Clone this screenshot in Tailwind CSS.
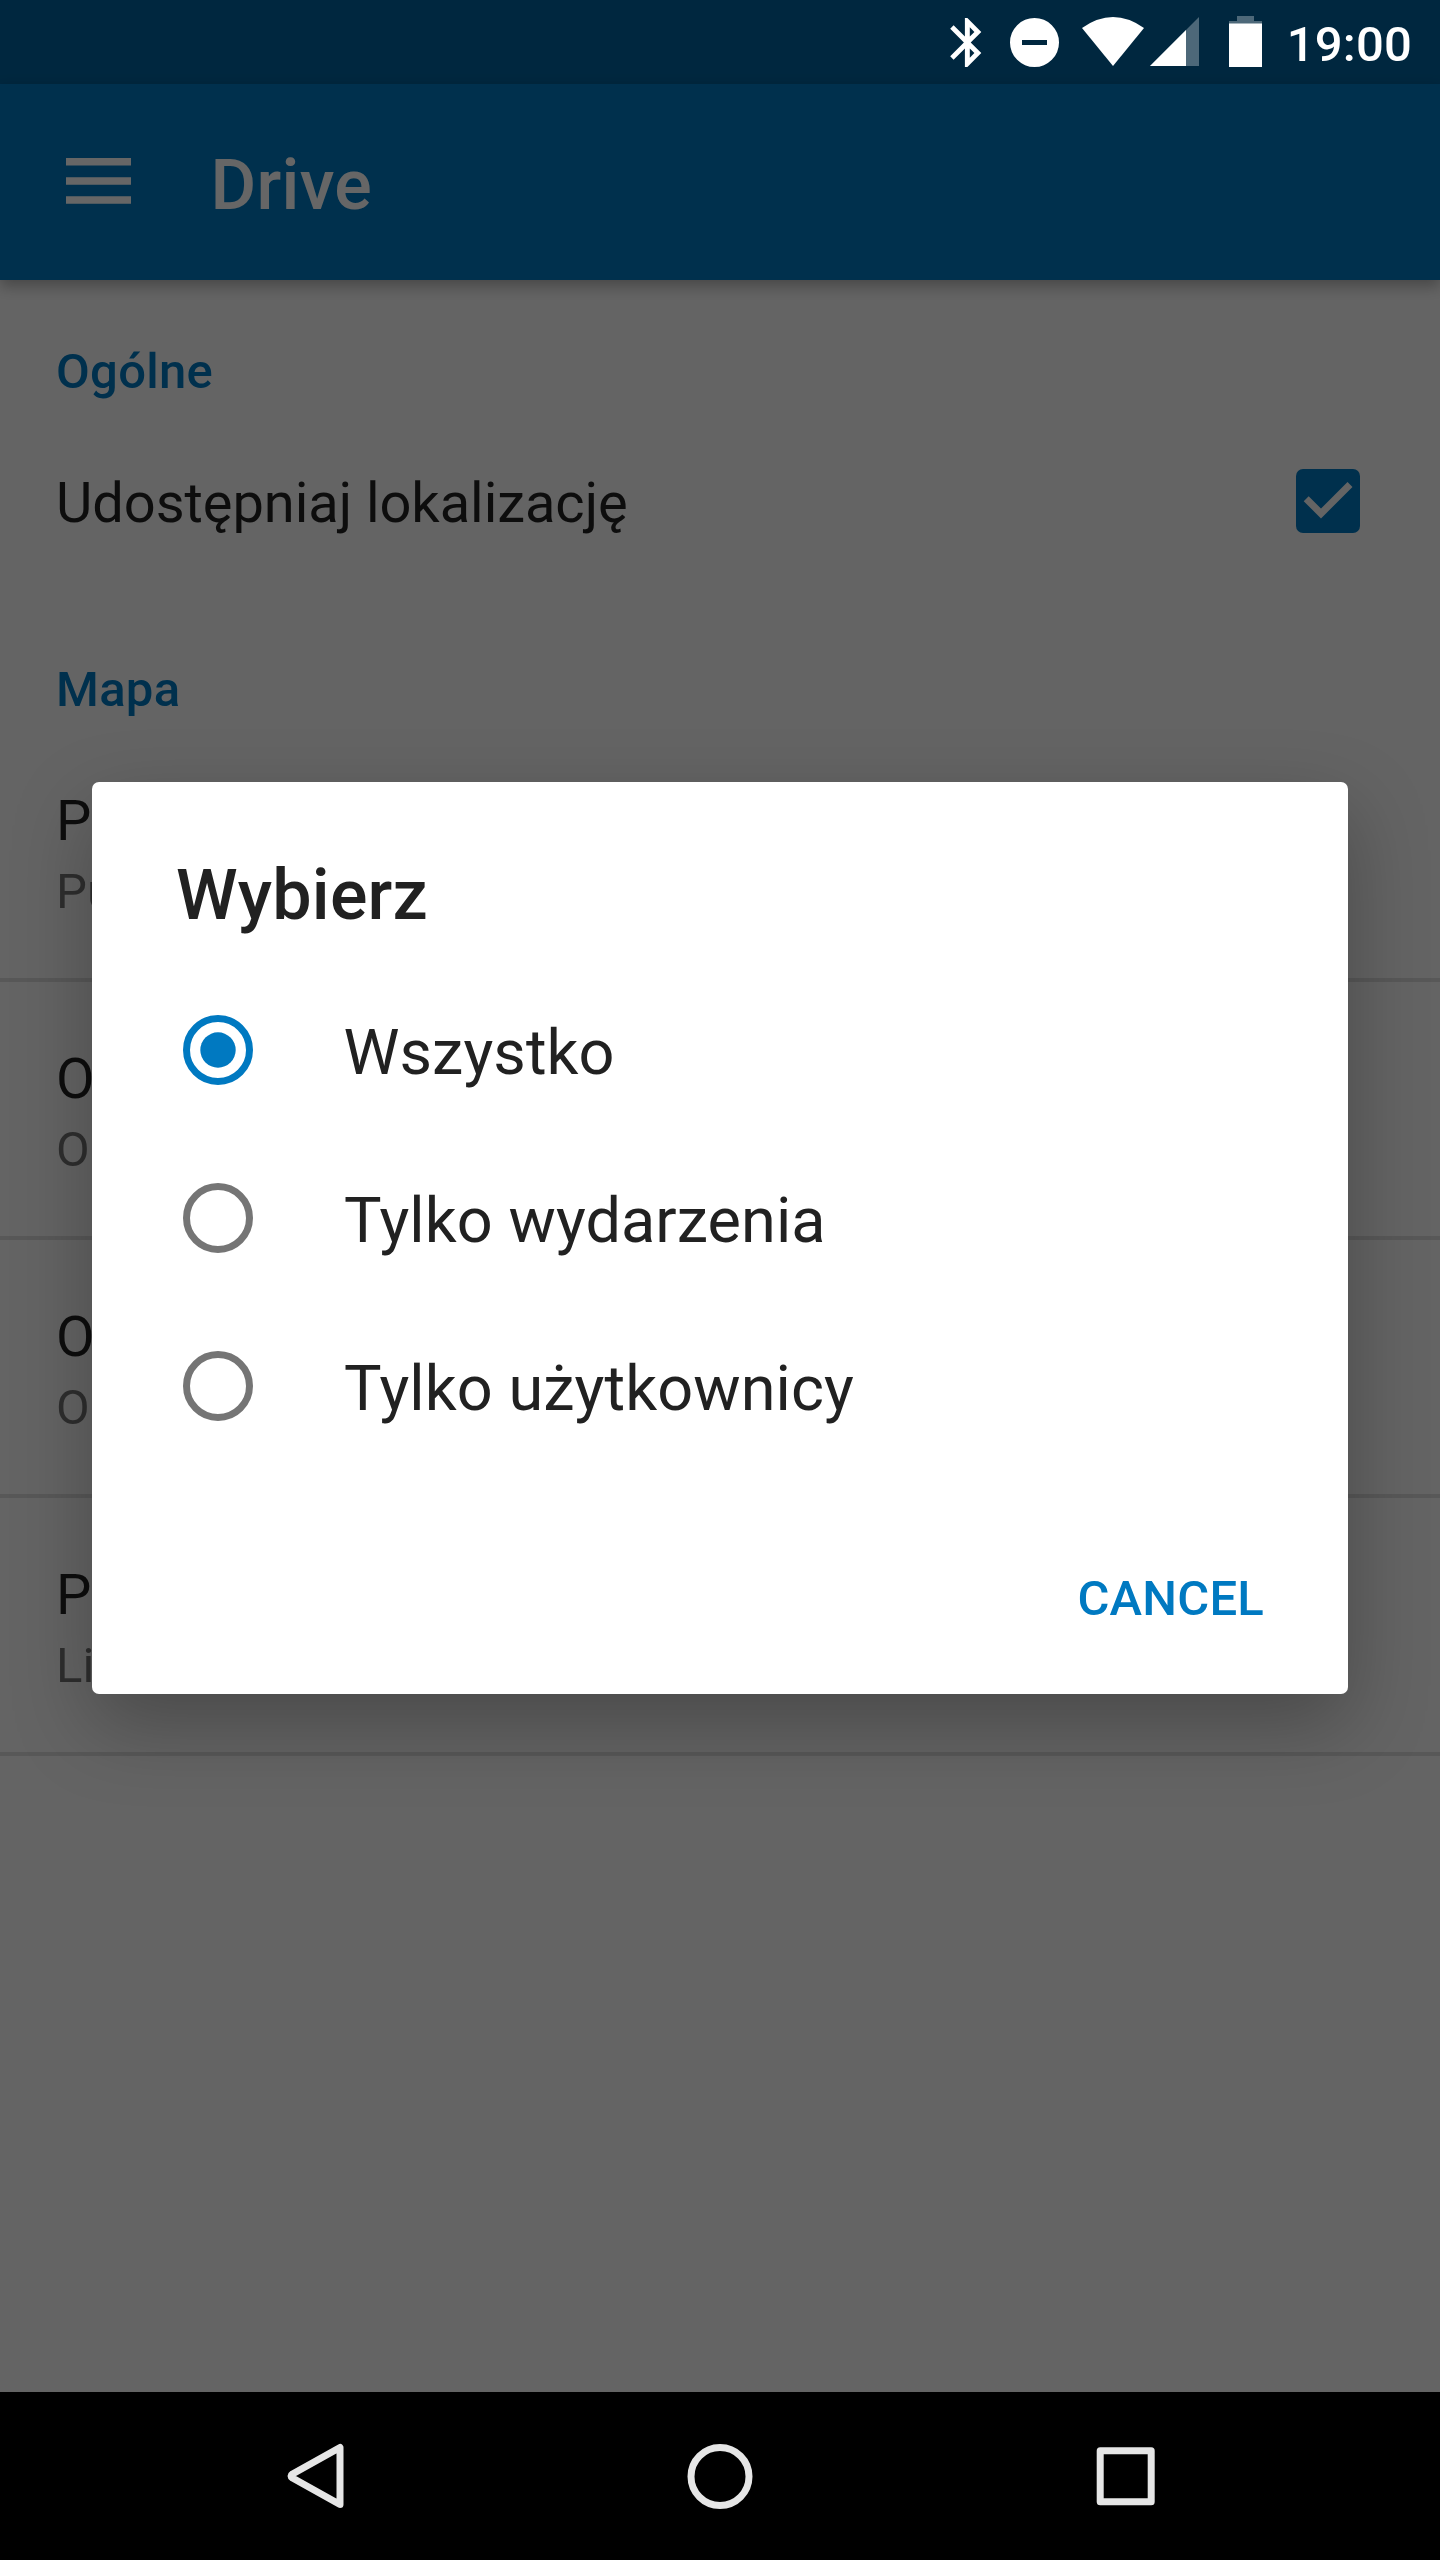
<!DOCTYPE html>
<html lang="pl">
<head>
<meta charset="utf-8">
<title>Drive</title>
<script src="https://cdn.jsdelivr.net/npm/@tailwindcss/browser@4"></script>
</head>
<body class="bg-black">
<div class="relative flex h-[2560px] w-[1440px] flex-col overflow-hidden bg-[#fafafa] font-[Roboto,sans-serif]">
  <div class="h-[84px] shrink-0 bg-[#00629d]"></div>
  <header class="z-0 flex h-[196px] shrink-0 items-center bg-[#0079c1] pl-[65.5px] text-white shadow-[0_6px_14px_rgba(0,0,0,0.3)]">
    <svg class="-mt-[3px] h-[46px] w-[65px]" viewBox="0 0 65 46" fill="currentColor"><path d="M0 0h65v7.5H0zM0 19.2h65v7.5H0zM0 38.2h65v7.5H0z"/></svg>
    <h1 class="mt-[6px] ml-[80px] text-[70px] leading-[82px] font-medium tracking-[0.3px]">Drive</h1>
  </header>
  <main class="flex grow flex-col text-[56px] leading-[70px] text-black/87">
    <h2 class="mt-[57px] pl-[56px] text-[49px] font-medium tracking-[0.3px] text-[#0079c1]">Ogólne</h2>
    <div class="flex h-[192px] items-center justify-between pr-[80px] pl-[56px]">
      <span class="tracking-[-0.05px]">Udostępniaj lokalizację</span>
      <svg class="-mt-[4px] size-[64px]" viewBox="0 0 64 64"><rect width="64" height="64" rx="7" fill="#0079c1"/><path d="M10.2 29.7 25 44.5 54 15.5" fill="none" stroke="#fafafa" stroke-width="7"/></svg>
    </div>
    <h2 class="mt-[56px] pl-[56px] text-[49px] font-medium tracking-[0.3px] text-[#0079c1]">Mapa</h2>
    <ul class="-mt-px">
      <li class="h-[258px] border-b-4 border-black/12 pt-[62px] pl-[56px]"><p>P</p><p class="pt-px text-[49px] text-black/54">Pu</p></li>
      <li class="h-[258px] border-b-4 border-black/12 pt-[62px] pl-[56px]"><p>O</p><p class="pt-px text-[49px] text-black/54">O</p></li>
      <li class="h-[258px] border-b-4 border-black/12 pt-[62px] pl-[56px]"><p>O</p><p class="pt-px text-[49px] text-black/54">O</p></li>
      <li class="h-[258px] border-b-4 border-black/12 pt-[62px] pl-[56px]"><p>P</p><p class="pt-px text-[49px] text-black/54">Li</p></li>
    </ul>
  </main>

  <!-- Scrim with dialog -->
  <div class="absolute inset-0 flex flex-col bg-black/60">
    <div class="flex h-[84px] shrink-0 items-center justify-end pr-[28px] text-white">
      <svg class="h-[84px] w-[340px]" viewBox="945 0 340 84" fill="currentColor">
        <path d="m981.3 31.9-13.9-13.9h-2.5v18.6L953.6 25.3l-3.4 3.4 13.7 13.8-13.7 13.8 3.4 3.4 11.3-11.3V67h2.5l13.9-13.9L970.7 42.500zM969.800 27.300l4.600 4.600-4.600 4.700zM974.400 53.100l-4.600 4.600v-9.300z"/>
        <path fill-rule="evenodd" d="M1034.500 18a24.500 24.500 0 1 0 0 49a24.500 24.500 0 1 0 0-49zM1022 40h25v5h-25z"/>
        <path d="M1082 28Q1113 6 1144 28L1113 66z"/>
        <path opacity=".3" d="M1199 17v49h-49z"/>
        <path d="M1186 30v36h-36z"/>
        <path opacity=".3" d="M1237 16h17v5h8v3h-33v-3h8z"/>
        <path d="M1229 23.500h33V67h-33z"/>
      </svg>
      <span class="mt-[5px] w-[127px] text-right text-[49px] leading-[60px] font-medium tracking-[0.2px]">19:00</span>
    </div>
    <section class="mt-[698px] ml-[92px] flex h-[912px] w-[1256px] flex-col rounded-[7px] bg-white px-[84px] text-[#212121] shadow-[0_30px_80px_rgba(0,0,0,0.27)]">
      <h2 class="mt-[72px] text-[70px] leading-[82px] font-medium tracking-[0.2px]">Wybierz</h2>
      <ul class="mt-[30px] text-[63px] leading-[168px] tracking-[0.08px]">
        <li class="flex h-[168px] items-center pl-[7px]"><svg class="size-[70px] text-[#0079c1]" viewBox="0 0 70 70"><circle cx="35" cy="35" r="31.500" fill="none" stroke="currentColor" stroke-width="7"/><circle cx="35" cy="35" r="17.700" fill="currentColor"/></svg><span class="mt-[5px] ml-[90.5px]">Wszystko</span></li>
        <li class="flex h-[168px] items-center pl-[7px]"><svg class="size-[70px] text-[#757575]" viewBox="0 0 70 70"><circle cx="35" cy="35" r="31.500" fill="none" stroke="currentColor" stroke-width="7"/></svg><span class="mt-[5px] ml-[91px]">Tylko wydarzenia</span></li>
        <li class="flex h-[168px] items-center pl-[7px]"><svg class="size-[70px] text-[#757575]" viewBox="0 0 70 70"><circle cx="35" cy="35" r="31.500" fill="none" stroke="currentColor" stroke-width="7"/></svg><span class="mt-[5px] ml-[91px]">Tylko użytkownicy</span></li>
      </ul>
      <button class="mt-[99px] self-end text-[49px] leading-[60px] font-medium tracking-[0.2px] text-[#0079c1]">CANCEL</button>
    </section>
    <nav class="mt-auto flex h-[168px] shrink-0 items-center justify-between bg-black pr-[285px] pl-[286px] text-[#e6e6e6]">
      <svg class="h-[66px] w-[58px]" viewBox="0 0 58 66" fill="none" stroke="currentColor" stroke-width="7" stroke-linejoin="round"><path d="M54 4.500v57L6.500 35Q3.500 33 6.500 31z"/></svg>
      <svg class="h-[66px] w-[66px]" viewBox="0 0 66 66" fill="none" stroke="currentColor" stroke-width="7"><circle cx="33" cy="33.500" r="29"/></svg>
      <svg class="h-[60px] w-[59px]" viewBox="0 0 59 60" fill="none" stroke="currentColor" stroke-width="7" stroke-linejoin="round"><path d="M4.200 4.700h51v51h-51z"/></svg>
    </nav>
  </div>
</div>
</body>
</html>
